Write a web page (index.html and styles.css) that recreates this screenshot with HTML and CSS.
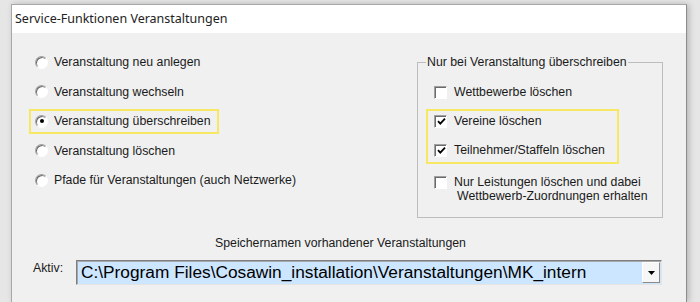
FILE: index.html
```html
<!DOCTYPE html>
<html>
<head>
    <meta charset="utf-8">
    <title>Service-Funktionen Veranstaltungen</title>
    <link rel="stylesheet" href="styles.css">
</head>
<body>
    <div class="window">
        <div class="titlebar">Service-Funktionen Veranstaltungen</div>
        <div class="content">
            <div class="main">
                <div class="options">
                    <div class="option"><span class="radio"></span>Veranstaltung neu anlegen</div>
                    <div class="option"><span class="radio"></span>Veranstaltung wechseln</div>
                    <div class="option marked"><span class="radio checked"></span>Veranstaltung überschreiben</div>
                    <div class="option"><span class="radio"></span>Veranstaltung löschen</div>
                    <div class="option"><span class="radio"></span>Pfade für Veranstaltungen (auch Netzwerke)</div>
                </div>
                <fieldset class="group">
                    <legend>Nur bei Veranstaltung überschreiben</legend>
                    <div class="check-row first"><span class="box"></span>Wettbewerbe löschen</div>
                    <div class="marked-group">
                        <div class="check-row">
                            <span class="box"><svg width="9" height="9" viewBox="0 0 9 9"><path d="M1 4.2 L3.3 6.6 L8 1.6" fill="none" stroke="#000" stroke-width="1.8"/></svg></span>Vereine löschen
                        </div>
                        <div class="check-row">
                            <span class="box"><svg width="9" height="9" viewBox="0 0 9 9"><path d="M1 4.2 L3.3 6.6 L8 1.6" fill="none" stroke="#000" stroke-width="1.8"/></svg></span>Teilnehmer/Staffeln löschen
                        </div>
                    </div>
                    <div class="check-row multi">
                        <span class="box"></span>
                        <span>Nur Leistungen löschen und dabei<br><span class="indent">Wettbewerb-Zuordnungen erhalten</span></span>
                    </div>
                </fieldset>
            </div>
            <div class="caption">Speichernamen vorhandener Veranstaltungen</div>
            <div class="active-row">
                <span class="label">Aktiv:</span>
                <div class="combo">
                    <span class="combo-text">C:\Program Files\Cosawin_installation\Veranstaltungen\MK_intern</span>
                    <span class="combo-btn"><svg width="7" height="4" viewBox="0 0 7 4"><path d="M0 0 H7 L3.5 4 Z" fill="#000"/></svg></span>
                </div>
            </div>
        </div>
    </div>
</body>
</html>
```

FILE: styles.css
```css
body {
    margin: 0;
    padding: 4px 0 0 11px;
    height: 302px;
    overflow: hidden;
    box-sizing: border-box;
    background-color: #e6e6e6;
    font-family: "Liberation Sans", Arial, sans-serif;
    font-size: 12.3px;
    color: #1a1a1a;
}

.window {
    width: 676px;
    height: 298px;
    box-sizing: border-box;
    border: 1px solid #a8a8a8;
    border-bottom: none;
    border-right-color: #8c8c8c;
    background-color: #f0f0f0;
    box-shadow: 2px 0 6px rgba(0, 0, 0, 0.22);
}

.titlebar {
    height: 28px;
    line-height: 28px;
    padding-left: 3px;
    background-color: #fff;
    font-family: "Noto Sans", sans-serif;
    font-size: 12.5px;
    color: #222;
}

.main {
    display: flex;
    align-items: flex-start;
    padding: 0 23px 0 17px;
}

.options {
    display: flex;
    flex-direction: column;
    align-items: flex-start;
    margin-top: 16.5px;
}

.option {
    display: flex;
    align-items: center;
    height: 25px;
    box-sizing: border-box;
    border: 2px solid transparent;
    padding: 0 6px 0 4px;
    margin-bottom: 4.5px;
}

.marked, .marked-group {
    border: 2px solid #f6e863;
}

.radio {
    width: 13px;
    height: 13px;
    box-sizing: border-box;
    margin-right: 6px;
    border-radius: 50%;
    border: 1px solid;
    border-color: #a0a0a0 #fff #fff #a0a0a0;
    background-color: #fff;
    box-shadow: inset 1px 1px 0 #6a6a6a;
    display: flex;
    align-items: center;
    justify-content: center;
}

.radio.checked::after {
    content: "";
    width: 4px;
    height: 4px;
    border-radius: 50%;
    background-color: #000;
}

.group {
    width: 246px;
    box-sizing: border-box;
    margin: 22px 0 0 auto;
    padding: 13px 8px 14px 8px;
    border: 1px solid #bdbdbd;
}

.group legend {
    padding: 0 1px;
    line-height: 14px;
}

.check-row {
    display: flex;
    align-items: center;
    height: 20px;
    padding-left: 8px;
}

.marked-group {
    width: fit-content;
    margin-top: 7px;
    padding: 0 12px 2px 0;
    display: flex;
    flex-direction: column;
    gap: 9px;
}

.marked-group .check-row {
    padding-left: 6px;
}

.check-row.multi {
    height: auto;
    align-items: flex-start;
    margin-top: 11px;
    line-height: 14px;
}

.check-row.multi .box {
    margin-top: 1px;
}

.indent {
    padding-left: 3px;
}

.box {
    width: 13px;
    height: 13px;
    flex: none;
    box-sizing: border-box;
    margin-right: 7px;
    border: 1px solid;
    border-color: #a0a0a0 #fff #fff #a0a0a0;
    background-color: #fff;
    box-shadow: inset 1px 1px 0 #6a6a6a;
    display: flex;
    align-items: center;
    justify-content: center;
    padding: 1px 0 0 1px;
}

.caption {
    margin-top: 18px;
    padding-left: 203px;
    line-height: 14px;
}

.active-row {
    display: flex;
    align-items: flex-start;
    margin-top: 10px;
    padding-left: 21px;
}

.label {
    width: 43px;
    margin-top: 1px;
    line-height: 14px;
}

.combo {
    width: 586px;
    height: 25px;
    box-sizing: border-box;
    display: flex;
    align-items: center;
    border: 1px solid;
    border-color: #7e7e7e #e4e4e4 #e4e4e4 #7e7e7e;
    box-shadow: inset 1px 1px 0 #a8a8a8;
    background-color: #cce6ff;
}

.combo-text {
    flex: 1;
    padding-left: 4px;
    font-size: 17.3px;
    color: #000;
    white-space: nowrap;
    overflow: hidden;
}

.combo-btn {
    width: 18px;
    height: 21px;
    flex: none;
    box-sizing: border-box;
    margin-right: 1px;
    display: flex;
    align-items: center;
    justify-content: center;
    background-color: #f6f6f6;
    border: 1px solid;
    border-color: #fff #8a8a8a #8a8a8a #fff;
}
```
